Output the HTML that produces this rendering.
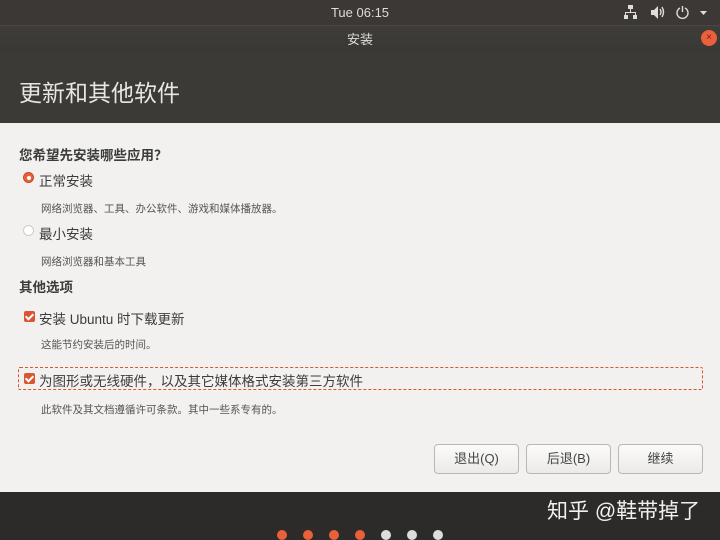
<!DOCTYPE html><html><head><meta charset="utf-8"><style>
*{margin:0;padding:0;box-sizing:border-box}
body{width:720px;height:540px;overflow:hidden;position:relative;font-family:"Liberation Sans","Noto Sans CJK SC",sans-serif;background:#f2f1f0}
.a{position:absolute}
.top{left:0;top:0;width:720px;height:25px;background:#3b3835;color:#ddd;font-size:13px;text-align:center;line-height:25px}
.tb{left:0;top:25px;width:720px;height:27px;background:linear-gradient(#3f3d39,#3a3835);color:#ddd;font-size:13px;text-align:center;line-height:27px;border-top:1px solid #4a4743}
.hd{left:0;top:52px;width:720px;height:71px;background:#3c3a36;color:#e8e6e3;font-size:23px;padding:22px 0 0 19px}
.t{font-size:13.5px;color:#3c3c3c}
.s{font-size:10.5px;color:#555}
.b{font-weight:bold}
.cb{width:11px;height:11px;background:#d9572f;border-radius:2px}
.cb:after{content:"";position:absolute;left:3px;top:1px;width:3px;height:6px;border:solid #fff;border-width:0 2px 2px 0;transform:rotate(45deg)}
.btn{top:444px;height:30px;border:1px solid #b9b7b4;border-radius:4px;background:linear-gradient(#fbfbfa,#eceae8);font-size:13px;color:#444;text-align:center;line-height:28px}
.bot{left:0;top:492px;width:720px;height:48px;background:#2c2b29}
.d{top:530px;width:10px;height:10px;border-radius:50%}
</style></head><body>
<div class="a top">Tue 06:15</div>
<svg class="a" style="left:624px;top:5px" width="90" height="16">
<g fill="#ddd"><rect x="4" y="0" width="5" height="4"/><rect x="6" y="4" width="1" height="4"/><rect x="1" y="7" width="11" height="1"/><rect x="1" y="7" width="1" height="3"/><rect x="11" y="7" width="1" height="3"/><rect x="0" y="10" width="4" height="4"/><rect x="9" y="10" width="4" height="4"/>
<path d="M27 5h3l4-4v13l-4-4h-3z"/></g>
<g fill="none" stroke="#ddd" stroke-width="1.4"><path d="M36 4q2 3 0 6M38 2q3 5 0 10"/><path d="M56 3a5.5 5.5 0 1 0 5 0"/><path d="M58.5 1v6"/></g>
<path d="M76 6h7l-3.5 4z" fill="#ddd"/></svg>
<div class="a tb">安装</div>
<div class="a" style="left:701px;top:30px;width:16px;height:16px;border-radius:50%;background:#e9603a;color:#7a2010;font-size:10px;text-align:center;line-height:16px">×</div>
<div class="a hd">更新和其他软件</div>
<div class="a t b" style="left:19px;top:144px">您希望先安装哪些应用？</div>
<div class="a" style="left:23px;top:172px;width:11px;height:11px;border-radius:50%;background:#e9603a;border:1px solid #c44a25"><div style="margin:2.5px;width:4px;height:4px;border-radius:50%;background:#fff"></div></div>
<div class="a t" style="left:39px;top:170px">正常安装</div>
<div class="a s" style="left:41px;top:201px">网络浏览器、工具、办公软件、游戏和媒体播放器。</div>
<div class="a" style="left:23px;top:225px;width:11px;height:11px;border-radius:50%;background:#fff;border:1px solid #ccc"></div>
<div class="a t" style="left:39px;top:223px">最小安装</div>
<div class="a s" style="left:41px;top:254px">网络浏览器和基本工具</div>
<div class="a t b" style="left:19px;top:276px">其他选项</div>
<div class="a cb" style="left:24px;top:311px"></div>
<div class="a t" style="left:39px;top:308px">安装 Ubuntu 时下载更新</div>
<div class="a s" style="left:41px;top:337px">这能节约安装后的时间。</div>
<div class="a" style="left:18px;top:367px;width:685px;height:23px;border:1px dashed #d9572f;border-radius:2px"></div>
<div class="a cb" style="left:24px;top:373px"></div>
<div class="a t" style="left:39px;top:370px">为图形或无线硬件，以及其它媒体格式安装第三方软件</div>
<div class="a s" style="left:41px;top:402px">此软件及其文档遵循许可条款。其中一些系专有的。</div>
<div class="a btn" style="left:434px;width:85px">退出(Q)</div>
<div class="a btn" style="left:526px;width:85px">后退(B)</div>
<div class="a btn" style="left:618px;width:85px">继续</div>
<div class="a bot"></div>
<div class="a" style="left:547px;top:495px;color:#f0f0f0;font-size:21px">知乎 @鞋带掉了</div>
<div class="a d" style="left:277px;background:#e9603a"></div>
<div class="a d" style="left:303px;background:#e9603a"></div>
<div class="a d" style="left:329px;background:#e9603a"></div>
<div class="a d" style="left:355px;background:#e9603a"></div>
<div class="a d" style="left:381px;background:#ddd"></div>
<div class="a d" style="left:407px;background:#ddd"></div>
<div class="a d" style="left:433px;background:#ddd"></div>
</body></html>
